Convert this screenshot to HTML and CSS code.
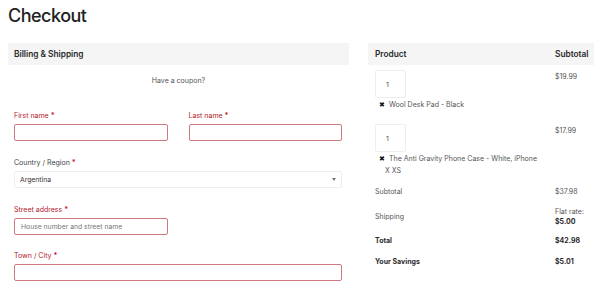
FILE: index.html
```html
<!DOCTYPE html>
<html lang="en">
    <head>
        <meta charset="UTF-8">
        <title>Checkout</title>
        <link rel="stylesheet" href="styles.css">
    </head>
    <body>
        <h1 class="title">Checkout</h1>
        <div class="checkout">
            <div class="billing">
                <div class="section-head">Billing &amp; Shipping</div>
                <div class="coupon">Have a coupon?</div>
                <div class="fields">
                    <div class="row first">
                        <div class="field">
                            <label class="label error">First name <span class="req">*</span></label>
                            <input class="input error" type="text">
                        </div>
                        <div class="field">
                            <label class="label error">Last name <span class="req">*</span></label>
                            <input class="input error" type="text">
                        </div>
                    </div>
                    <div class="field">
                        <label class="label">Country / Region <span class="req">*</span></label>
                        <div class="select">
                            <span>Argentina</span>
                            <span class="caret"></span>
                        </div>
                    </div>
                    <div class="row">
                        <div class="field">
                            <label class="label error">Street address <span class="req">*</span></label>
                            <input class="input error" type="text" placeholder="House number and street name">
                        </div>
                        <div class="field"></div>
                    </div>
                    <div class="field city">
                        <label class="label error">Town / City <span class="req">*</span></label>
                        <input class="input error" type="text">
                    </div>
                </div>
            </div>
            <div class="order">
                <div class="order-head">
                    <span>Product</span>
                    <span class="col-price">Subtotal</span>
                </div>
                <div class="item">
                    <div class="item-info">
                        <div class="qty">1</div>
                        <div class="item-name"><span class="remove">&#x2716;</span>Wool Desk Pad - Black</div>
                    </div>
                    <div class="col-price price">$19.99</div>
                </div>
                <div class="item second">
                    <div class="item-info">
                        <div class="qty">1</div>
                        <div class="item-name"><span class="remove">&#x2716;</span>The Anti Gravity Phone Case - White, iPhone X XS</div>
                    </div>
                    <div class="col-price price">$17.99</div>
                </div>
                <div class="total-row">
                    <span>Subtotal</span>
                    <span class="col-price">$37.98</span>
                </div>
                <div class="total-row shipping">
                    <span>Shipping</span>
                    <span class="col-price">Flat rate:<br><b>$5.00</b></span>
                </div>
                <div class="total-row strong">
                    <span>Total</span>
                    <span class="col-price">$42.98</span>
                </div>
                <div class="total-row strong last">
                    <span>Your Savings</span>
                    <span class="col-price">$5.01</span>
                </div>
            </div>
        </div>
    </body>
</html>
```
FILE: styles.css
```css
*{
    margin: 0;
    padding: 0;
    box-sizing: border-box;
}
body{
    margin: 8px;
    font-family: Inter, "Liberation Sans", sans-serif;
    font-size: 7px;
    color: #3c3c3c;
    overflow: hidden;
}
.title{
    font-size: 18px;
    font-weight: 500;
    letter-spacing: -0.5px;
    color: #222;
    line-height: 16px;
    margin-top: 0;
}
.checkout{
    display: flex;
    gap: 19px;
    margin-top: 19px;
}
.billing{
    width: 341px;
    flex-shrink: 0;
}
.section-head{
    height: 22px;
    background: #f5f5f5;
    padding-left: 6px;
    display: flex;
    align-items: center;
    font-size: 8.3px;
    font-weight: 600;
    color: #2a2a2a;
}
.coupon{
    text-align: center;
    color: #555;
    margin-top: 11px;
    height: 10px;
    line-height: 10px;
}
.fields{
    padding: 0 7px 0 6px;
}
.row{
    display: flex;
    gap: 21px;
}
.row .field{
    flex: 1;
}
.label{
    display: block;
    margin-top: 17px;
    height: 10px;
    line-height: 10px;
    color: #444;
}
.row.first .label{
    margin-top: 25px;
}
.city .label{
    margin-top: 16px;
}
.label.error{
    color: #b4202a;
}
.req{
    color: #c8102e;
    font-weight: 700;
}
.input{
    display: block;
    width: 100%;
    height: 17px;
    margin-top: 3px;
    border: 1px solid #ddd;
    border-radius: 2px;
    font-family: inherit;
    font-size: 6.8px;
    padding: 0 6px;
    outline: none;
}
.input.error{
    border-color: #cf7a80;
}
.input::placeholder{
    color: #777;
}
.select{
    height: 17px;
    margin-top: 3px;
    border: 1px solid #eee;
    border-radius: 2px;
    padding: 0 5px;
    display: flex;
    align-items: center;
    justify-content: space-between;
    font-size: 6.8px;
    color: #333;
}
.caret{
    width: 0;
    height: 0;
    border-left: 2px solid transparent;
    border-right: 2px solid transparent;
    border-top: 3px solid #777;
}
.order{
    flex: 1;
    margin-right: -8px;
}
.order-head{
    height: 22px;
    background: #f5f5f5;
    display: flex;
    align-items: center;
    padding-left: 7px;
    font-size: 8.3px;
    font-weight: 600;
    color: #2a2a2a;
}
.order-head span:first-child,
.item-info,
.total-row span:first-child{
    flex: 1;
}
.col-price{
    width: 47px;
    flex-shrink: 0;
}
.item{
    display: flex;
    padding: 5px 0 0 7px;
    height: 54px;
}
.item.second{
    height: 60px;
}
.qty{
    width: 31px;
    height: 28px;
    border: 1px solid #eee;
    border-radius: 2px;
    display: flex;
    align-items: center;
    padding-left: 10px;
    font-size: 6.8px;
    color: #444;
}
.item-name{
    margin-top: 1px;
    padding-left: 10px;
    width: 165px;
    line-height: 12px;
    color: #555;
}
.remove{
    display: inline-block;
    width: 10px;
    margin-left: -6px;
    font-size: 6.5px;
    color: #111;
}
.price{
    padding-top: 2px;
    color: #555;
}
.total-row{
    display: flex;
    align-items: center;
    padding-left: 7px;
    height: 25px;
    color: #555;
}
.total-row.shipping{
    height: 25px;
    line-height: 10px;
}
.total-row.strong{
    font-weight: 700;
    color: #2a2a2a;
    height: 23px;
}
.total-row.last{
    height: 18px;
}
.total-row b{
    color: #2a2a2a;
}
```
